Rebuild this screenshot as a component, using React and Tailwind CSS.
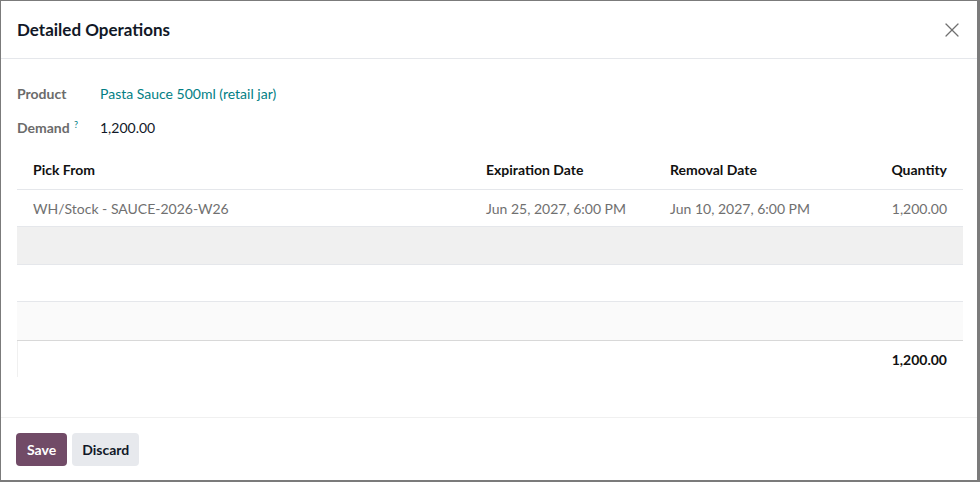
import { X } from 'lucide-react';

const cols = 'grid grid-cols-[453px_184px_184px_1fr]';

export default function App() {
  return (
    <div
      className="h-[482px] w-[980px] bg-[#7b7b7b] pb-[2px] pl-px pr-[3px] pt-px"
      style={{ fontFamily: 'Lato, "Noto Sans", sans-serif' }}
    >
      <div className="flex h-full flex-col bg-white">
        <div className="flex h-[58px] shrink-0 items-center justify-between border-b border-[#e5e7eb] pl-4 pr-[13px]">
          <h2 className="text-[17px] font-bold text-[#111827]">Detailed Operations</h2>
          <button type="button" className="text-[#707070]" aria-label="Close">
            <X size={24} strokeWidth={1.2} />
          </button>
        </div>

        <div className="flex-1 px-4 pt-[23px]">
          <div className="flex h-[22px] items-center text-[14px]">
            <span className="w-[83px] font-bold text-[#6b6b6b]">Product</span>
            <span className="text-[#017e84]">Pasta Sauce 500ml (retail jar)</span>
          </div>
          <div className="mt-[12px] flex h-[22px] items-center text-[14px]">
            <span className="w-[83px] font-bold text-[#6b6b6b]">
              Demand <sup className="ml-px text-[9px] font-normal text-[#017e84]">?</sup>
            </span>
            <span className="text-[#111827]">1,200.00</span>
          </div>

          <div className="mt-[12px] w-[946px] text-[14px]">
            <div className={`${cols} h-[40px] items-center border-b border-[#e5e7eb] font-bold text-[#111]`}>
              <span className="pl-4">Pick From</span>
              <span className="pl-4">Expiration Date</span>
              <span className="pl-4">Removal Date</span>
              <span className="pr-4 text-right">Quantity</span>
            </div>
            <div className={`${cols} h-[37px] items-center border-b border-[#e5e7eb] text-[#707070]`}>
              <span className="pl-4">WH/Stock - SAUCE-2026-W26</span>
              <span className="pl-4">Jun 25, 2027, 6:00 PM</span>
              <span className="pl-4">Jun 10, 2027, 6:00 PM</span>
              <span className="pr-4 text-right">1,200.00</span>
            </div>
            <div className="h-[38px] border-b border-[#e5e7eb] bg-[#f0f0f0]" />
            <div className="h-[37px] border-b border-[#e5e7eb] bg-white" />
            <div className="h-[39px] border-b border-[#d8d8d8] bg-[#fafafa]" />
            <div className={`${cols} h-[36px] items-center border-l border-[#f0f0f0] font-bold text-[#111]`}>
              <span />
              <span />
              <span />
              <span className="pr-4 text-right">1,200.00</span>
            </div>
          </div>
        </div>

        <div className="flex h-[63px] shrink-0 items-start gap-[5px] border-t border-[#f0f0f0] px-[15px] pt-[15px]">
          <button
            type="button"
            className="h-[33px] rounded-[4px] bg-[#714b67] px-[11px] text-[14px] font-bold text-white"
          >
            Save
          </button>
          <button
            type="button"
            className="h-[33px] rounded-[4px] bg-[#e7e9ed] px-[10px] text-[14px] font-bold text-[#111827]"
          >
            Discard
          </button>
        </div>
      </div>
    </div>
  );
}
